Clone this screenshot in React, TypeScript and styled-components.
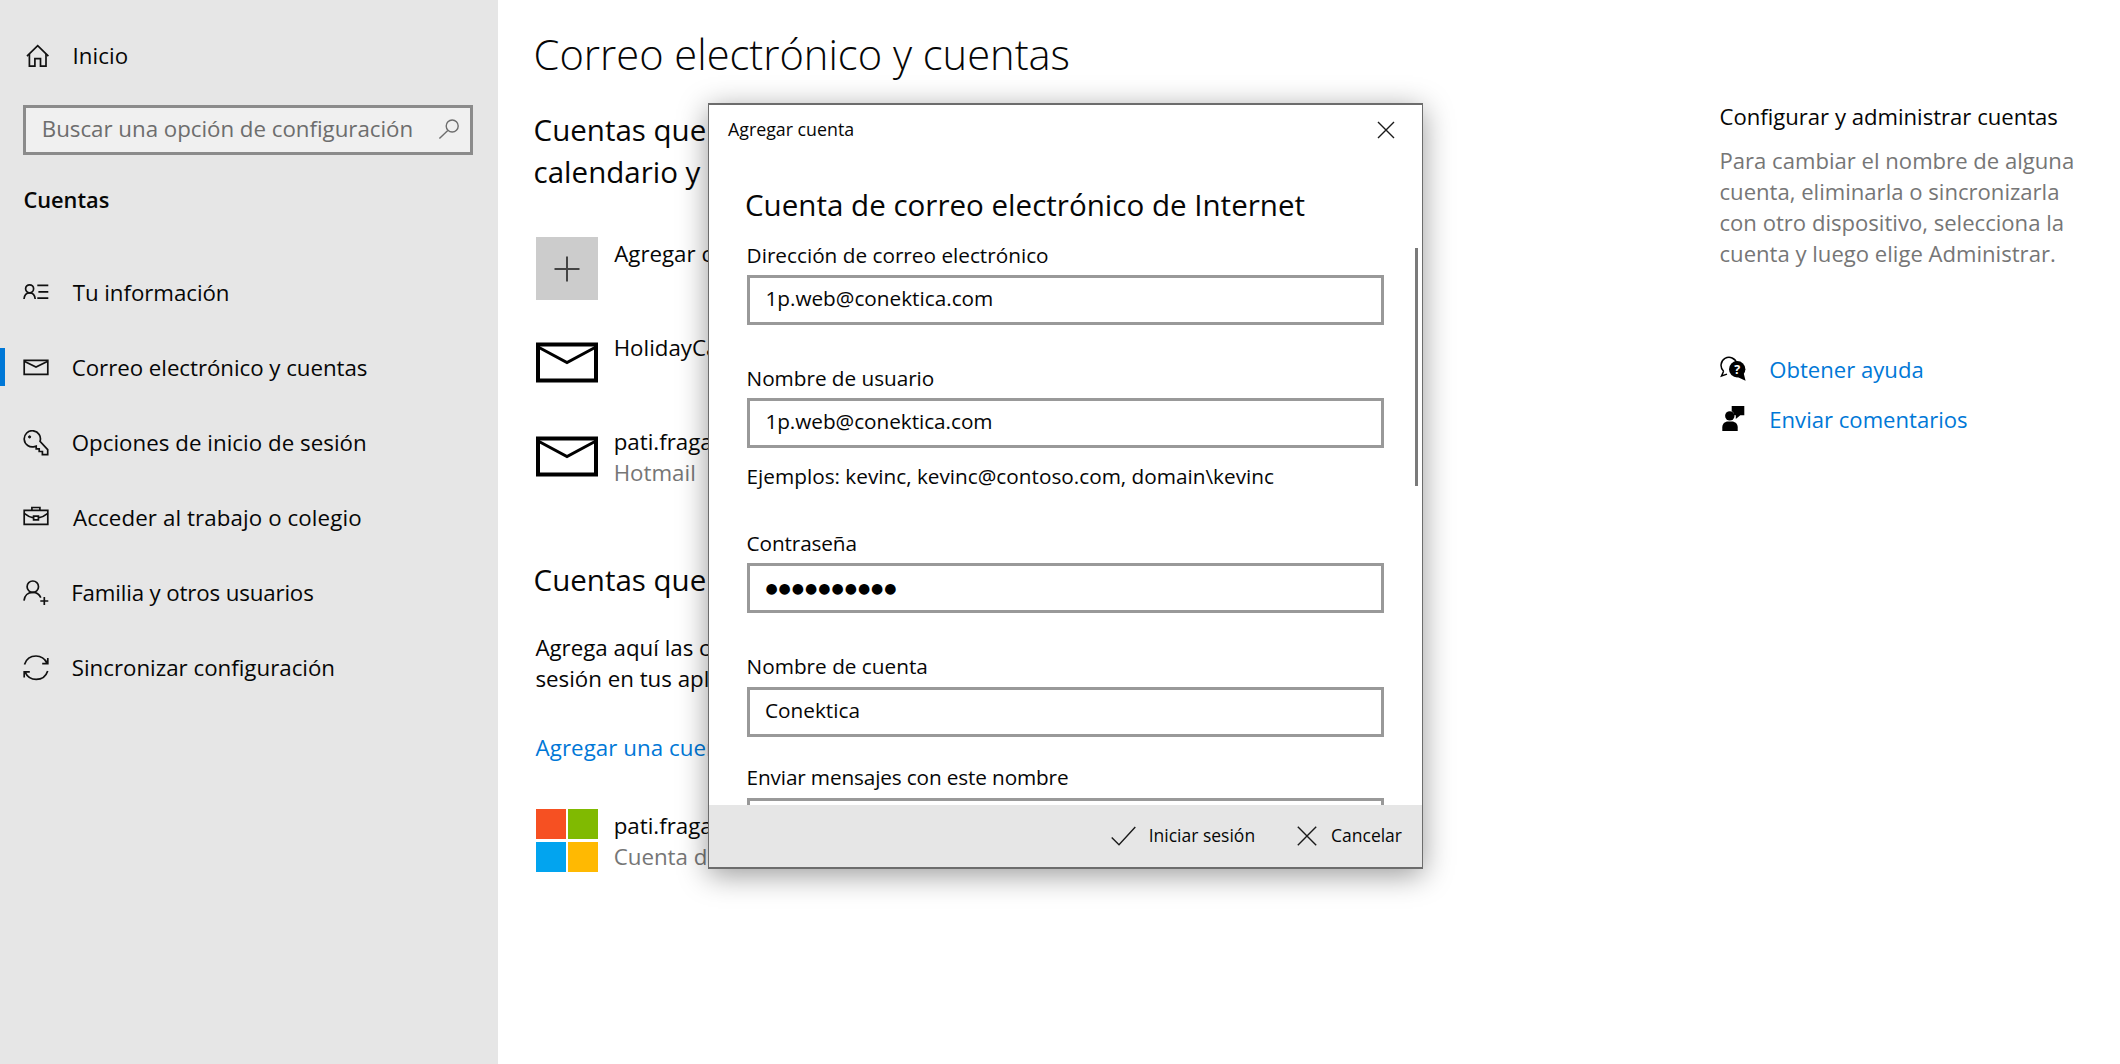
import React from 'react';
import styled, { createGlobalStyle } from 'styled-components';

const GlobalStyle = createGlobalStyle`
  *, *::before, *::after { box-sizing: border-box; }
  html, body { margin: 0; padding: 0; background: #fff; }
  body {
    font-family: 'Open Sans', 'Noto Sans', sans-serif;
    font-size: 22.3px;
    color: #060606;
    overflow: hidden;
  }
  h1, h2, h3, p { margin: 0; font-weight: 400; }
`;

const accent = '#0078d7';
const muted = '#767676';

const Screen = styled.div`
  position: relative;
  display: grid;
  grid-template-columns: 498px 1221.5px 1fr;
  width: 2120px;
  height: 1064px;
  overflow: hidden;
  white-space: nowrap;
`;

/* ---------- Sidebar ---------- */

const Sidebar = styled.aside`
  display: flex;
  flex-direction: column;
  padding-top: 30px;
  background: #e6e6e6;
`;

const NavIcon = styled.svg`
  flex: none;
  width: 26px;
  height: 26px;
  fill: none;
  stroke: #111;
  stroke-width: 1.7;
`;

const HomeRow = styled.a`
  display: flex;
  align-items: center;
  gap: 21.5px;
  height: 51px;
  padding-left: 25px;
  letter-spacing: 0.1px;
`;

const SearchBox = styled.div`
  display: flex;
  align-items: center;
  justify-content: space-between;
  width: 450px;
  height: 50px;
  margin: 24px 0 0 23.4px;
  padding: 0 10px 3px 15.4px;
  border: 3px solid #8b8b8b;
  background: #f0f0f0;
  color: #6d6d6d;
  letter-spacing: -0.02px;
`;

const SectionName = styled.h3`
  height: 50px;
  margin: 20.4px 0 29.8px 23.4px;
  line-height: 50px;
  font-size: 21.8px;
  font-weight: 600;
`;

const NavItem = styled.a<{ $active?: boolean; $indent?: number; $tracking?: number }>`
  display: flex;
  align-items: center;
  height: 75px;
  letter-spacing: ${(p) => p.$tracking ?? 0}px;

  &::before {
    content: '';
    width: 5px;
    height: 38px;
    margin: 0 18px 1.5px 0;
    background: ${(p) => (p.$active ? accent : 'transparent')};
  }

  span {
    margin-left: ${(p) => 22.7 + (p.$indent ?? 0)}px;
    padding-bottom: 0.4px;
  }
`;

/* ---------- Main column ---------- */

const Main = styled.main`
  display: flex;
  flex-direction: column;
  padding: 26.2px 0 0 35.6px;
`;

const PageTitle = styled.h1`
  height: 56px;
  line-height: 56px;
  margin-bottom: 26.4px;
  font-size: 41.65px;
  font-weight: 300;
`;

const GroupTitle = styled.h2`
  line-height: 42px;
  font-size: 29.5px;
`;

const AccountList = styled.div`
  display: flex;
  flex-direction: column;
  gap: 31.25px;
  margin: 44.9px 0 71.2px;
`;

const AccountRow = styled.div<{ $indent?: number }>`
  display: flex;
  gap: ${(p) => 15.7 + (p.$indent ?? 0)}px;
  height: 62.5px;
  padding-left: 2.4px;
  line-height: 31.25px;
`;

const AccountText = styled.div`
  display: flex;
  flex-direction: column;
  padding-top: 0.6px;
`;

const Muted = styled.span`
  color: ${muted};
`;

const AddTile = styled.div`
  display: grid;
  place-items: center;
  width: 62px;
  height: 62.5px;
  background: #ccc;
`;

const MailIcon = styled.svg`
  width: 62px;
  height: 62.5px;
  fill: none;
  stroke: #000;
`;

const Paragraph = styled.p`
  margin: 31px 0 37.5px;
  padding-left: 1.8px;
  line-height: 31.25px;
`;

const LinkText = styled.a`
  color: ${accent};
`;

const AddLink = styled(LinkText)`
  line-height: 31.25px;
  padding-left: 2px;
  margin-bottom: 46.3px;
  letter-spacing: 0.05px;
`;

const LogoTiles = styled.div`
  display: grid;
  grid-template-columns: 30px 30px;
  grid-template-rows: 30px 30px;
  gap: 2.5px;
  width: 62px;
`;

const Tile = styled.i<{ $color: string }>`
  background: ${(p) => p.$color};
`;

/* ---------- Help column ---------- */

const Help = styled.aside`
  display: flex;
  flex-direction: column;
  padding-top: 100.2px;
  font-size: 22.1px;
`;

const HelpTitle = styled.h3`
  line-height: 32px;
  font-size: 22.1px;
`;

const HelpBody = styled.p`
  margin: 12.4px 0 74.4px;
  line-height: 31.25px;
  color: ${muted};
`;

const HelpLink = styled.div`
  display: flex;
  align-items: center;
  gap: 23.8px;
  height: 50px;
`;

const HelpIcon = styled.svg`
  width: 26px;
  height: 26px;
`;

/* ---------- Dialog ---------- */

const Dialog = styled.section`
  position: absolute;
  left: 708px;
  top: 103px;
  display: flex;
  flex-direction: column;
  width: 715px;
  height: 766px;
  border: 1.5px solid #6c6c6c;
  border-width: 2px 1px;
  background: #fff;
  box-shadow: 0 6px 28px rgba(0, 0, 0, 0.4);
  font-size: 20.75px;
`;

const TitleBar = styled.header`
  display: flex;
  align-items: center;
  justify-content: space-between;
  height: 50px;
  padding: 0 27.5px 0 19px;
  font-size: 17.8px;

  span { padding-bottom: 2px; }
`;

const LineIcon = styled.svg`
  fill: none;
  stroke: #1a1a1a;
  stroke-width: 1.4;
`;

const DialogHeading = styled.h2`
  margin: 28.7px 0 14.9px 36px;
  line-height: 42px;
  font-size: 29.55px;
`;

const Body = styled.div`
  display: flex;
  justify-content: space-between;
  flex: 1;
  min-height: 0;
  padding: 0 4px 0 37.6px;
  overflow: hidden;
`;

const Form = styled.div`
  display: flex;
  flex-direction: column;
`;

const Thumb = styled.div`
  width: 3px;
  height: 238px;
  margin-top: 7.4px;
  background: #7a7a7a;
`;

const Field = styled.label<{ $gap?: number; $tracking?: number }>`
  display: flex;
  flex: none;
  flex-direction: column;
  margin-bottom: ${(p) => p.$gap ?? 38.9}px;
  line-height: 28px;
  letter-spacing: ${(p) => p.$tracking ?? 0}px;
`;

const Input = styled.div<{ $indent?: number }>`
  display: flex;
  align-items: center;
  width: 637px;
  height: 50px;
  margin: 6.2px 0 0 0.4px;
  padding: 0 0 3px ${(p) => 15.4 + (p.$indent ?? 0)}px;
  border: 3px solid #999;
`;

const Dots = styled.span`
  padding-top: 2px;
  font-family: 'DejaVu Sans', sans-serif;
  font-size: 14px;
  letter-spacing: 1px;
  color: #000;
`;

const Hint = styled.p`
  margin-bottom: 38.9px;
  line-height: 28px;
`;

const Footer = styled.footer`
  display: flex;
  align-items: center;
  justify-content: flex-end;
  gap: 41.5px;
  height: 62px;
  padding: 0 20px 0 0;
  background: #e6e6e6;
  font-size: 17.5px;
`;

const Action = styled.div<{ $gap: number }>`
  display: flex;
  align-items: center;
  gap: ${(p) => p.$gap}px;

  span { padding-bottom: 1.5px; }
`;

/* ---------- Icons ---------- */

const HomeIcon = () => (
  <NavIcon viewBox="0 0 26 26">
    <path d="M2 13.2 12.7 2.6 23.4 13.2" />
    <path d="M4.4 11v12.2h5.5v-7.6h5.6v7.6H21V11" />
  </NavIcon>
);

const ContactIcon = () => (
  <NavIcon viewBox="0 0 26 26">
    <circle cx="6.6" cy="8.8" r="4" />
    <path d="M1 19c.4-3.9 2.5-6.2 5.6-6.2s5.2 2.3 5.6 6.2M14.3 5.4h11M15.4 11.800h9.900M14.300 18.200h11" />
  </NavIcon>
);

const EnvelopeIcon = () => (
  <NavIcon viewBox="0 0 26 26">
    <path d="M1.200 5.300h23.600v14H1.200z" />
    <path d="M1.200 6.300 13 12l11.800-5.700" />
  </NavIcon>
);

const KeyIcon = () => (
  <NavIcon viewBox="0 0 26 26">
    <path d="M17 11.400a8.100 8.100 0 1 0-5.400 5.200l1.600-.5v2.700h3v2.700h3.200v3.100h5.300v-4.900z" />
    <circle cx="6.600" cy="6.900" r="1.100" fill="#111" strokeWidth="1" />
  </NavIcon>
);

const BriefcaseIcon = () => (
  <NavIcon viewBox="0 0 26 26">
    <path d="M1.200 5.300h23.600v14H1.200zM8.900 5V2.500h8V5" />
    <path d="M1.200 8.300c3 2.400 6 4 9.400 4.600M24.800 8.300c-3 2.400-6 4-9.400 4.600M10.600 11.200h4.800v3.600h-4.800z" />
  </NavIcon>
);

const FamilyIcon = () => (
  <NavIcon viewBox="0 0 26 26">
    <circle cx="9.800" cy="6.700" r="5.700" />
    <path d="M1 20.600c.5-5 4-8.200 8.800-8.200 3.800 0 6.600 2 8 5.300M21.300 17v8M17.300 21h8" />
  </NavIcon>
);

const SyncIcon = () => (
  <NavIcon viewBox="0 0 26 26">
    <path d="M1.500 9.400C3.200 4.200 7.600 1 13 1c4.800 0 8.900 2.700 11 7.100M24.800 3v5.600h-5.600" />
    <path d="M24.700 16C23 21.200 18.600 24.400 13.200 24.400c-4.800 0-8.900-2.700-11-7.100M1.200 22.400v-5.600h5.600" />
  </NavIcon>
);

const BigMail = () => (
  <MailIcon viewBox="0 0 62 62.5">
    <path d="M2 13.500h58v36H2z" strokeWidth="4" />
    <path d="M3 16.500 31 31.600 59 16.500" strokeWidth="3" />
  </MailIcon>
);

const navItems = [
  { label: 'Tu información', icon: <ContactIcon />, indent: 1, tracking: -0.05 },
  { label: 'Correo electrónico y cuentas', icon: <EnvelopeIcon />, active: true, tracking: -0.04 },
  { label: 'Opciones de inicio de sesión', icon: <KeyIcon />, tracking: 0.03 },
  { label: 'Acceder al trabajo o colegio', icon: <BriefcaseIcon />, indent: 1.4, tracking: 0.1 },
  { label: 'Familia y otros usuarios', icon: <FamilyIcon />, indent: -0.5, tracking: -0.15 },
  { label: 'Sincronizar configuración', icon: <SyncIcon /> },
];

export default function App() {
  return (
    <>
      <GlobalStyle />
      <Screen>
        <Sidebar>
          <HomeRow>
            <HomeIcon />
            <span>Inicio</span>
          </HomeRow>
          <SearchBox>
            <span>Buscar una opción de configuración</span>
            <LineIcon width="22" height="22" viewBox="0 0 22 22" style={{ stroke: '#6d6d6d' }}>
              <circle cx="14.2" cy="8" r="6" />
              <path d="M9.8 12.4 1.4 20.6" />
            </LineIcon>
          </SearchBox>
          <SectionName>Cuentas</SectionName>
          {navItems.map((item) => (
            <NavItem key={item.label} $active={item.active} $indent={item.indent} $tracking={item.tracking}>
              {item.icon}
              <span>{item.label}</span>
            </NavItem>
          ))}
        </Sidebar>

        <Main>
          <PageTitle>Correo electrónico y cuentas</PageTitle>
          <GroupTitle>
            Cuentas que
            <br />
            calendario y
          </GroupTitle>
          <AccountList>
            <AccountRow $indent={0.5}>
              <AddTile>
                <LineIcon width="26" height="26" viewBox="0 0 26 26" style={{ stroke: '#444', strokeWidth: 2 }}>
                  <path d="M13 .5v25M.5 13h25" />
                </LineIcon>
              </AddTile>
              <AccountText>Agregar c</AccountText>
            </AccountRow>
            <AccountRow>
              <BigMail />
              <AccountText>HolidayCa</AccountText>
            </AccountRow>
            <AccountRow>
              <BigMail />
              <AccountText>
                <span>pati.fraga</span>
                <Muted>Hotmail</Muted>
              </AccountText>
            </AccountRow>
          </AccountList>
          <GroupTitle>Cuentas que</GroupTitle>
          <Paragraph>
            Agrega aquí las c
            <br />
            sesión en tus apl
          </Paragraph>
          <AddLink>Agregar una cuen</AddLink>
          <AccountRow>
            <LogoTiles>
              <Tile $color="#f65022" />
              <Tile $color="#80ba01" />
              <Tile $color="#02a4ef" />
              <Tile $color="#ffb902" />
            </LogoTiles>
            <AccountText>
              <span>pati.fraga</span>
              <Muted>Cuenta de</Muted>
            </AccountText>
          </AccountRow>
        </Main>

        <Help>
          <HelpTitle>Configurar y administrar cuentas</HelpTitle>
          <HelpBody>
            Para cambiar el nombre de alguna
            <br />
            cuenta, eliminarla o sincronizarla
            <br />
            con otro dispositivo, selecciona la
            <br />
            cuenta y luego elige Administrar.
          </HelpBody>
          <HelpLink>
            <HelpIcon viewBox="0 0 26 26">
              <path
                d="M3.6 15.2A8 8 0 1 1 16.8 7.4M3.6 15.2 1.5 20l5.500-1.900"
                fill="none"
                stroke="#000"
                strokeWidth="1.5"
              />
              <circle cx="17.2" cy="13.3" r="8.2" />
              <path d="M18 21.3 25.6 24.8 23.6 17z" />
              <text x="17.2" y="18" textAnchor="middle" fontSize="12.5" fontWeight="700" fill="#fff">
                ?
              </text>
            </HelpIcon>
            <LinkText>Obtener ayuda</LinkText>
          </HelpLink>
          <HelpLink>
            <HelpIcon viewBox="0 0 26 26">
              <path d="M11.7 0h12.6v9.2h-4L15.8 13V9.2h-1.6A5.8 5.8 0 0 0 11.7 5z" />
              <circle cx="9.8" cy="9.9" r="4.7" />
              <path d="M2.3 25v-3.5c0-3.6 2.4-5.9 5.8-5.9h3.7c3.4 0 5.9 2.3 5.9 5.9V25z" />
            </HelpIcon>
            <LinkText>Enviar comentarios</LinkText>
          </HelpLink>
        </Help>

        <Dialog>
          <TitleBar>
            <span>Agregar cuenta</span>
            <LineIcon width="18" height="18" viewBox="0 0 18 18">
              <path d="M1 1l16 16M17 1 1 17" />
            </LineIcon>
          </TitleBar>
          <DialogHeading>Cuenta de correo electrónico de Internet</DialogHeading>
          <Body>
            <Form>
              <Field>
                Dirección de correo electrónico
                <Input>1p.web@conektica.com</Input>
              </Field>
              <Field $gap={14.5} $tracking={-0.04}>
                Nombre de usuario
                <Input>1p.web@conektica.com</Input>
              </Field>
              <Hint>Ejemplos: kevinc, kevinc@contoso.com, domain\kevinc</Hint>
              <Field $tracking={-0.12}>
                Contraseña
                <Input>
                  <Dots>●●●●●●●●●●</Dots>
                </Input>
              </Field>
              <Field $gap={26.9}>
                Nombre de cuenta
                <Input $indent={-0.4}>Conektica</Input>
              </Field>
              <Field $tracking={-0.14}>
                Enviar mensajes con este nombre
                <Input />
              </Field>
            </Form>
            <Thumb />
          </Body>
          <Footer>
            <Action $gap={12.3}>
              <LineIcon width="25" height="20" viewBox="0 0 25 20">
                <path d="M.7 11.5 8 18.7 24.3 1" />
              </LineIcon>
              <span>Iniciar sesión</span>
            </Action>
            <Action $gap={14.4}>
              <LineIcon width="20" height="20" viewBox="0 0 20 20">
                <path d="M.8.8l18.4 18.4M19.2.8.8 19.2" />
              </LineIcon>
              <span>Cancelar</span>
            </Action>
          </Footer>
        </Dialog>
      </Screen>
    </>
  );
}
